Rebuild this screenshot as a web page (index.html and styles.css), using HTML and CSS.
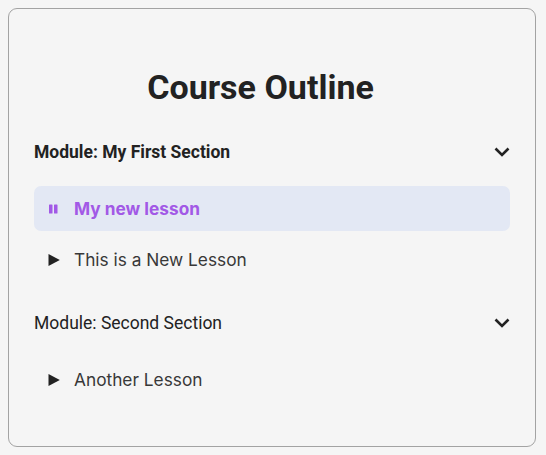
FILE: index.html
```html
<!DOCTYPE html>
<html>
<head>
<meta charset="utf-8">
<link rel="stylesheet" href="styles.css">
</head>
<body>
<div class="card">
  <h2 class="title">Course Outline</h2>

  <div class="module">
    <div class="module-header">
      <span class="module-name strong">Module: My First Section</span>
      <svg class="chevron" width="16" height="10" viewBox="0 0 16 10"><path d="M1.5 1.5 L8 8 L14.5 1.5" fill="none" stroke="#222" stroke-width="2.6"/></svg>
    </div>
    <ul class="lessons">
      <li class="lesson active">
        <span class="icon"><svg width="12" height="12" viewBox="0 0 12 12"><rect x="1" y="1.5" width="3.5" height="9" rx="0.6" fill="#a259e6"/><rect x="6" y="1.5" width="3.5" height="9" rx="0.6" fill="#a259e6"/></svg></span>
        <span class="lesson-name">My new lesson</span>
      </li>
      <li class="lesson">
        <span class="icon"><svg width="12" height="12" viewBox="0 0 12 12"><path d="M0.5 0 L11.8 6 L0.5 12 Z" fill="#222"/></svg></span>
        <span class="lesson-name">This is a New Lesson</span>
      </li>
    </ul>
  </div>

  <div class="module">
    <div class="module-header">
      <span class="module-name">Module: Second Section</span>
      <svg class="chevron" width="16" height="10" viewBox="0 0 16 10"><path d="M1.5 1.5 L8 8 L14.5 1.5" fill="none" stroke="#222" stroke-width="2.6"/></svg>
    </div>
    <ul class="lessons">
      <li class="lesson">
        <span class="icon"><svg width="12" height="12" viewBox="0 0 12 12"><path d="M0.5 0 L11.8 6 L0.5 12 Z" fill="#222"/></svg></span>
        <span class="lesson-name">Another Lesson</span>
      </li>
    </ul>
  </div>
</div>
</body>
</html>
```

FILE: styles.css
```css
html, body {
  background: #f5f5f5;
}
body {
  margin: 8px;
  font-family: Roboto, "Liberation Sans", sans-serif;
  color: #222;
}
.card {
  box-sizing: border-box;
  width: 528px;
  height: 439px;
  border: 1px solid #a3a3a3;
  border-radius: 9px;
  background: #f5f5f5;
  padding: 0 25px;
}
.title {
  margin: 58px 0 21px;
  padding-right: 23px;
  font-family: Roboto, sans-serif;
  font-weight: 700;
  font-size: 34px;
  line-height: 40px;
  text-align: center;
  color: #222;
}
.module-header {
  height: 48px;
  display: flex;
  align-items: center;
  justify-content: space-between;
}
.module-name {
  font-family: Roboto, sans-serif;
  font-size: 17.5px;
  font-weight: 400;
  color: #222;
}
.module-name.strong {
  font-weight: 700;
}
.chevron {
  display: block;
}
.lessons {
  list-style: none;
  margin: 10px 0 17px;
  padding: 0;
  display: flex;
  flex-direction: column;
  gap: 6px;
}
.lesson {
  height: 45px;
  display: flex;
  align-items: center;
  gap: 14px;
  padding-left: 14px;
  border-radius: 7px;
  font-family: Inter, sans-serif;
  font-size: 17.3px;
  color: #383838;
}
.lesson.active {
  background: #e3e8f4;
  color: #a259e6;
  font-weight: 700;
}
.icon {
  display: flex;
  width: 12px;
  height: 12px;
}
.icon svg {
  display: block;
}
```
